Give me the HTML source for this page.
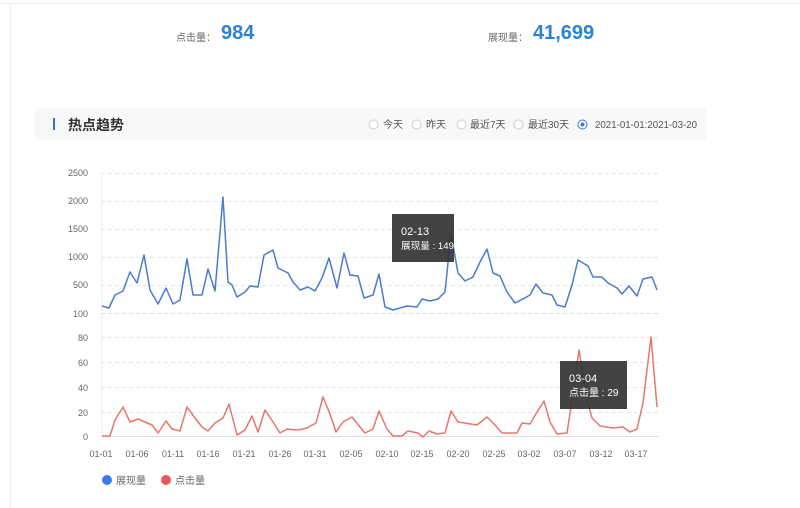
<!DOCTYPE html>
<html><head><meta charset="utf-8">
<style>
html,body{margin:0;padding:0;background:#fff;width:800px;height:508px;overflow:hidden;font-family:"Liberation Sans","Noto Sans CJK SC",sans-serif;}
.abs{position:absolute;white-space:nowrap;}
</style></head><body>
<div class="abs" style="left:0;top:3px;width:800px;height:1px;background:#eee"></div>
<div class="abs" style="left:10px;top:3px;width:1px;height:505px;background:#eee"></div>

<div class="abs" style="left:176px;top:29px;font-size:10px;color:#666">点击量：</div>
<div class="abs" style="left:221px;top:22px;font-size:20px;font-weight:bold;color:#2a83d8">984</div>
<div class="abs" style="left:488px;top:29px;font-size:10px;color:#666">展现量：</div>
<div class="abs" style="left:533px;top:22px;font-size:20px;font-weight:bold;color:#2a83d8">41,699</div>

<div class="abs" style="left:35px;top:108px;width:671px;height:32px;background:#f8f8f8"></div>
<div class="abs" style="left:53px;top:118px;width:2px;height:12px;background:#3a6fd8"></div>
<div class="abs" style="left:68px;top:115px;font-size:14px;font-weight:bold;color:#333">热点趋势</div>

<svg class="abs" style="left:0;top:0" width="800" height="508">
<g fill="#fff" stroke="#ccc" stroke-width="1">
<circle cx="373.5" cy="124.5" r="4.5"/><circle cx="416.5" cy="124.5" r="4.5"/><circle cx="461.5" cy="124.5" r="4.5"/><circle cx="518.5" cy="124.5" r="4.5"/>
<circle cx="582.5" cy="124.5" r="4.5" stroke="#3a7bd5"/></g>
<circle cx="582.5" cy="124.5" r="2" fill="#3a7bd5"/>
<g font-size="10" fill="#555" font-family="Liberation Sans,Noto Sans CJK SC,sans-serif">
<text x="383" y="128">今天</text><text x="426" y="128">昨天</text><text x="470" y="128">最近7天</text><text x="528" y="128">最近30天</text><text x="595" y="128" textLength="102" lengthAdjust="spacingAndGlyphs">2021-01-01:2021-03-20</text>
</g>

<g stroke="#e6e6e6" stroke-dasharray="4,3" stroke-width="1">
<line x1="101" y1="173.5" x2="658" y2="173.5"/><line x1="101" y1="201.5" x2="658" y2="201.5"/><line x1="101" y1="229.5" x2="658" y2="229.5"/><line x1="101" y1="257.5" x2="658" y2="257.5"/><line x1="101" y1="285.5" x2="658" y2="285.5"/>
<line x1="101" y1="313.5" x2="658" y2="313.5" stroke="#ddd"/>
<line x1="101" y1="337.5" x2="658" y2="337.5"/><line x1="101" y1="362.5" x2="658" y2="362.5"/><line x1="101" y1="387.5" x2="658" y2="387.5"/><line x1="101" y1="412.5" x2="658" y2="412.5"/>
</g>
<line x1="101" y1="436.5" x2="658" y2="436.5" stroke="#ddd"/>
<line x1="101.5" y1="173" x2="101.5" y2="437" stroke="#f0f0f0"/>

<g font-size="9" fill="#666" text-anchor="end" font-family="Liberation Sans,sans-serif">
<text x="88" y="176">2500</text><text x="88" y="204">2000</text><text x="88" y="232">1500</text><text x="88" y="260">1000</text><text x="88" y="288">500</text><text x="88" y="317">100</text>
<text x="88" y="341">80</text><text x="88" y="366">60</text><text x="88" y="391">40</text><text x="88" y="416">20</text><text x="88" y="440">0</text>
</g>
<g font-size="9" fill="#666" text-anchor="middle" font-family="Liberation Sans,sans-serif">
<text x="101" y="457">01-01</text><text x="137" y="457">01-06</text><text x="173" y="457">01-11</text><text x="208" y="457">01-16</text><text x="244" y="457">01-21</text><text x="280" y="457">01-26</text><text x="315" y="457">01-31</text><text x="351" y="457">02-05</text><text x="387" y="457">02-10</text><text x="422" y="457">02-15</text><text x="458" y="457">02-20</text><text x="494" y="457">02-25</text><text x="529" y="457">03-02</text><text x="565" y="457">03-07</text><text x="601" y="457">03-12</text><text x="636" y="457">03-17</text>
</g>

<polyline fill="none" stroke="#4a7bd0" stroke-width="1.5" stroke-linejoin="round" points="102,306 109,308 115,295 123,291 130,272 137,283 144,255 150,290 158,304 166,288 173,304 180,300 187,259 193,295 202,295 208,269 215,291 223,197 228,282 232,285 237,297 245,292 250,286 258,287 264,255 273,250 278,268 288,273 293,282 300,290 308,287 315,291 322,278 329,258 337,288 344,253 350,275 358,276 364,298 373,295 379,274 385,307 393,310 407,306 417,307 422,299 430,301 438,299 445,292 451,234 458,273 465,281 473,277 480,262 487,249 493,273 500,276 507,292 515,303 523,299 530,295 536,284 543,293 552,295 557,305 565,307 572,285 578,260 588,266 593,277 602,277 608,283 617,288 622,294 629,286 637,296 643,279 652,277 657,290"/>
<polyline fill="none" stroke="#e8766a" stroke-width="1.5" stroke-linejoin="round" points="102,436 110,436 115,420 123,407 130,422 138,419 152,425 158,433 166,421 172,429 180,431 187,407 195,418 202,427 208,431 215,423 223,418 229,404 237,435 245,430 252,416 258,432 265,410 273,422 280,433 287,429 298,430 307,428 316,423 323,397 330,414 336,432 343,422 352,417 360,427 365,433 373,429 379,411 387,429 393,436 402,436 408,431 418,433 423,437 429,431 437,434 445,433 451,411 458,422 477,425 487,417 495,425 502,433 517,433 522,423 530,424 537,412 544,401 550,422 557,434 567,433 572,400 579,350 587,400 592,418 600,426 613,428 623,427 630,432 637,429 643,403 651,337 657,407"/>

<rect x="392" y="214" width="62" height="48" fill="#333" fill-opacity="0.92"/>
<text x="401" y="235" font-size="11" fill="#fff" font-family="Liberation Sans,sans-serif">02-13</text>
<text x="401" y="249" font-size="9.5" fill="#fff" font-family="Liberation Sans,Noto Sans CJK SC,sans-serif" textLength="53" lengthAdjust="spacingAndGlyphs">展现量 : 149</text>
<rect x="560" y="361" width="67" height="48" fill="#333" fill-opacity="0.92"/>
<text x="569" y="382" font-size="11" fill="#fff" font-family="Liberation Sans,sans-serif">03-04</text>
<text x="569" y="396" font-size="10" fill="#fff" font-family="Liberation Sans,Noto Sans CJK SC,sans-serif">点击量 : 29</text>

<circle cx="107" cy="480" r="5" fill="#3a7be8"/>
<text x="116" y="484" font-size="10" fill="#666" font-family="Liberation Sans,Noto Sans CJK SC,sans-serif">展现量</text>
<circle cx="166" cy="480" r="5" fill="#e85a50"/>
<text x="175" y="484" font-size="10" fill="#666" font-family="Liberation Sans,Noto Sans CJK SC,sans-serif">点击量</text>
</svg>
</body></html>
